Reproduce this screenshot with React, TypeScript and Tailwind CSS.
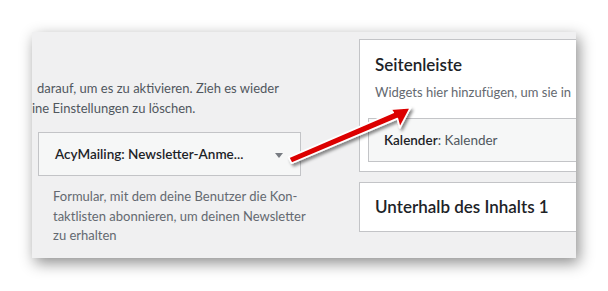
import React from 'react';

const Arrow: React.FC = () => (
  <svg className="absolute left-0 top-0 pointer-events-none" width="608" height="291" viewBox="0 0 608 291">
    <defs>
      <filter id="arrowShadow" x="-20%" y="-20%" width="140%" height="140%">
        <feDropShadow dx="2" dy="2.5" stdDeviation="1.6" floodColor="#000" floodOpacity="0.45" />
      </filter>
    </defs>
    <polygon
      points="288.6,157.4 393.2,112.4 390.8,109.2 410.5,107.6 399.8,127.8 397.4,118.6 291.6,163.2"
      fill="#dc0000"
      stroke="#ffffff"
      strokeWidth="1.7"
      strokeLinejoin="round"
      filter="url(#arrowShadow)"
    />
  </svg>
);

export default function App() {
  return (
    <div className="relative w-[608px] h-[291px] bg-white overflow-hidden pt-[32px] pl-[32px] font-['Lato',sans-serif]">
      <div className="w-[544px] h-[226px] bg-[#f0f0f1] overflow-hidden flex shadow-[3px_5px_14px_rgba(0,0,0,0.45)]">
        {/* left: available widgets */}
        <div className="w-[327px] shrink-0">
          <div className="pt-[46px] text-[13px] leading-[20px] text-[#50575e] whitespace-nowrap">
            <div className="pl-[5px]">darauf, um es zu aktivieren. Zieh es wieder</div>
            <div>ine Einstellungen zu löschen.</div>
          </div>
          <div className="mt-[14px] ml-[6px] w-[263px] h-[44px] border border-[#c3c4c7] bg-[#f6f7f7] flex items-center justify-between pl-[16px] pr-[17px]">
            <span className="text-[13.5px] font-semibold text-[#1d2327] whitespace-nowrap">AcyMailing: Newsletter-Anme...</span>
            <span className="mt-[2px] w-0 h-0 border-l-[4px] border-r-[4px] border-t-[5px] border-l-transparent border-r-transparent border-t-[#787c82]" />
          </div>
          <div className="mt-[11px] pl-[21px] text-[13px] leading-[19.5px] text-[#646970] whitespace-nowrap">
            <div>Formular, mit dem deine Benutzer die Kon-</div>
            <div>taktlisten abonnieren, um deinen Newsletter</div>
            <div>zu erhalten</div>
          </div>
        </div>

        {/* right: sidebars */}
        <div className="w-[250px] shrink-0 pt-[7px] flex flex-col gap-[10px]">
          <div className="h-[133px] border border-[#c3c4c7] bg-white pt-[13px]">
            <h2 className="pl-[15px] text-[17px] leading-[24px] font-semibold text-[#1d2327]">Seitenleiste</h2>
            <p className="mt-[5px] pl-[15px] text-[13px] leading-[20px] text-[#646970] whitespace-nowrap">Widgets hier hinzufügen, um sie in</p>
            <div className="mt-[16px] ml-[8px] h-[44px] border border-[#c3c4c7] bg-[#f6f7f7] flex items-center pl-[15px]">
              <span className="text-[13.5px] whitespace-nowrap">
                <span className="font-semibold text-[#1d2327]">Kalender</span>
                <span className="text-[#50575e]">: Kalender</span>
              </span>
            </div>
          </div>
          <div className="h-[50px] border border-[#c3c4c7] bg-white pt-[12px]">
            <h2 className="pl-[15px] text-[17px] leading-[24px] font-semibold text-[#1d2327] whitespace-nowrap">Unterhalb des Inhalts 1</h2>
          </div>
        </div>
      </div>
      <Arrow />
    </div>
  );
}
